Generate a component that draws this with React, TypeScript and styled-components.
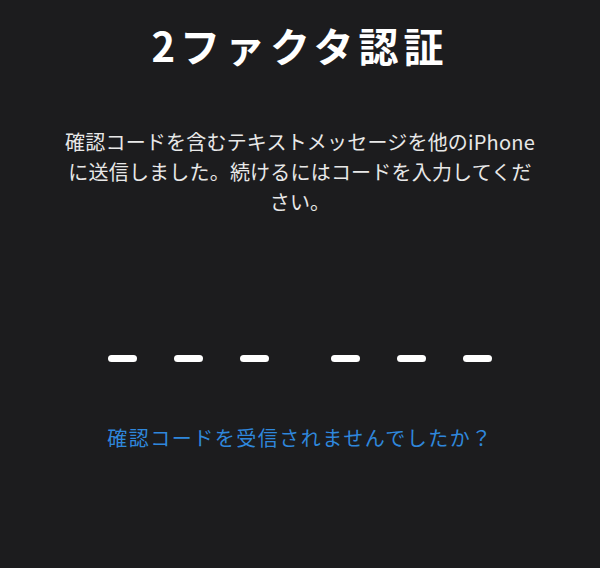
import styled, { createGlobalStyle } from "styled-components";

const GlobalStyle = createGlobalStyle`
  html, body {
    margin: 0;
    padding: 0;
    background: #1c1c1e;
  }
`;

const Screen = styled.div`
  width: 600px;
  height: 568px;
  background: #1c1c1e;
  display: flex;
  flex-direction: column;
  align-items: center;
  padding-top: 21px;
  box-sizing: border-box;
  font-family: "Noto Sans CJK JP", "Noto Sans", sans-serif;
  overflow: hidden;
`;

const Title = styled.h1`
  margin: 0;
  font-size: 40px;
  line-height: 48px;
  font-weight: 700;
  letter-spacing: 5px;
  color: #ffffff;
`;

const Message = styled.p`
  margin: 58px 0 0;
  width: 480px;
  font-size: 20px;
  line-height: 30px;
  letter-spacing: 0.2px;
  color: #e8e8e8;
  text-align: center;
`;

const CodeRow = styled.div`
  margin-top: 138px;
  display: flex;
  gap: 62px;
`;

const CodeGroup = styled.div`
  display: flex;
  gap: 37px;
`;

const Dash = styled.span`
  display: block;
  width: 29px;
  height: 7px;
  border-radius: 4px;
  background: #ffffff;
`;

const ResendLink = styled.a`
  margin-top: 61px;
  font-size: 20px;
  line-height: 30px;
  letter-spacing: 1.5px;
  color: #2f87dc;
  text-decoration: none;
  cursor: pointer;
`;

const App = () => {
  return (
    <>
      <GlobalStyle />
      <Screen>
        <Title>2ファクタ認証</Title>
        <Message>
          確認コードを含むテキストメッセージを他のiPhoneに送信しました。続けるにはコードを入力してください。
        </Message>
        <CodeRow>
          <CodeGroup>
            <Dash />
            <Dash />
            <Dash />
          </CodeGroup>
          <CodeGroup>
            <Dash />
            <Dash />
            <Dash />
          </CodeGroup>
        </CodeRow>
        <ResendLink>確認コードを受信されませんでしたか？</ResendLink>
      </Screen>
    </>
  );
};

export default App;
